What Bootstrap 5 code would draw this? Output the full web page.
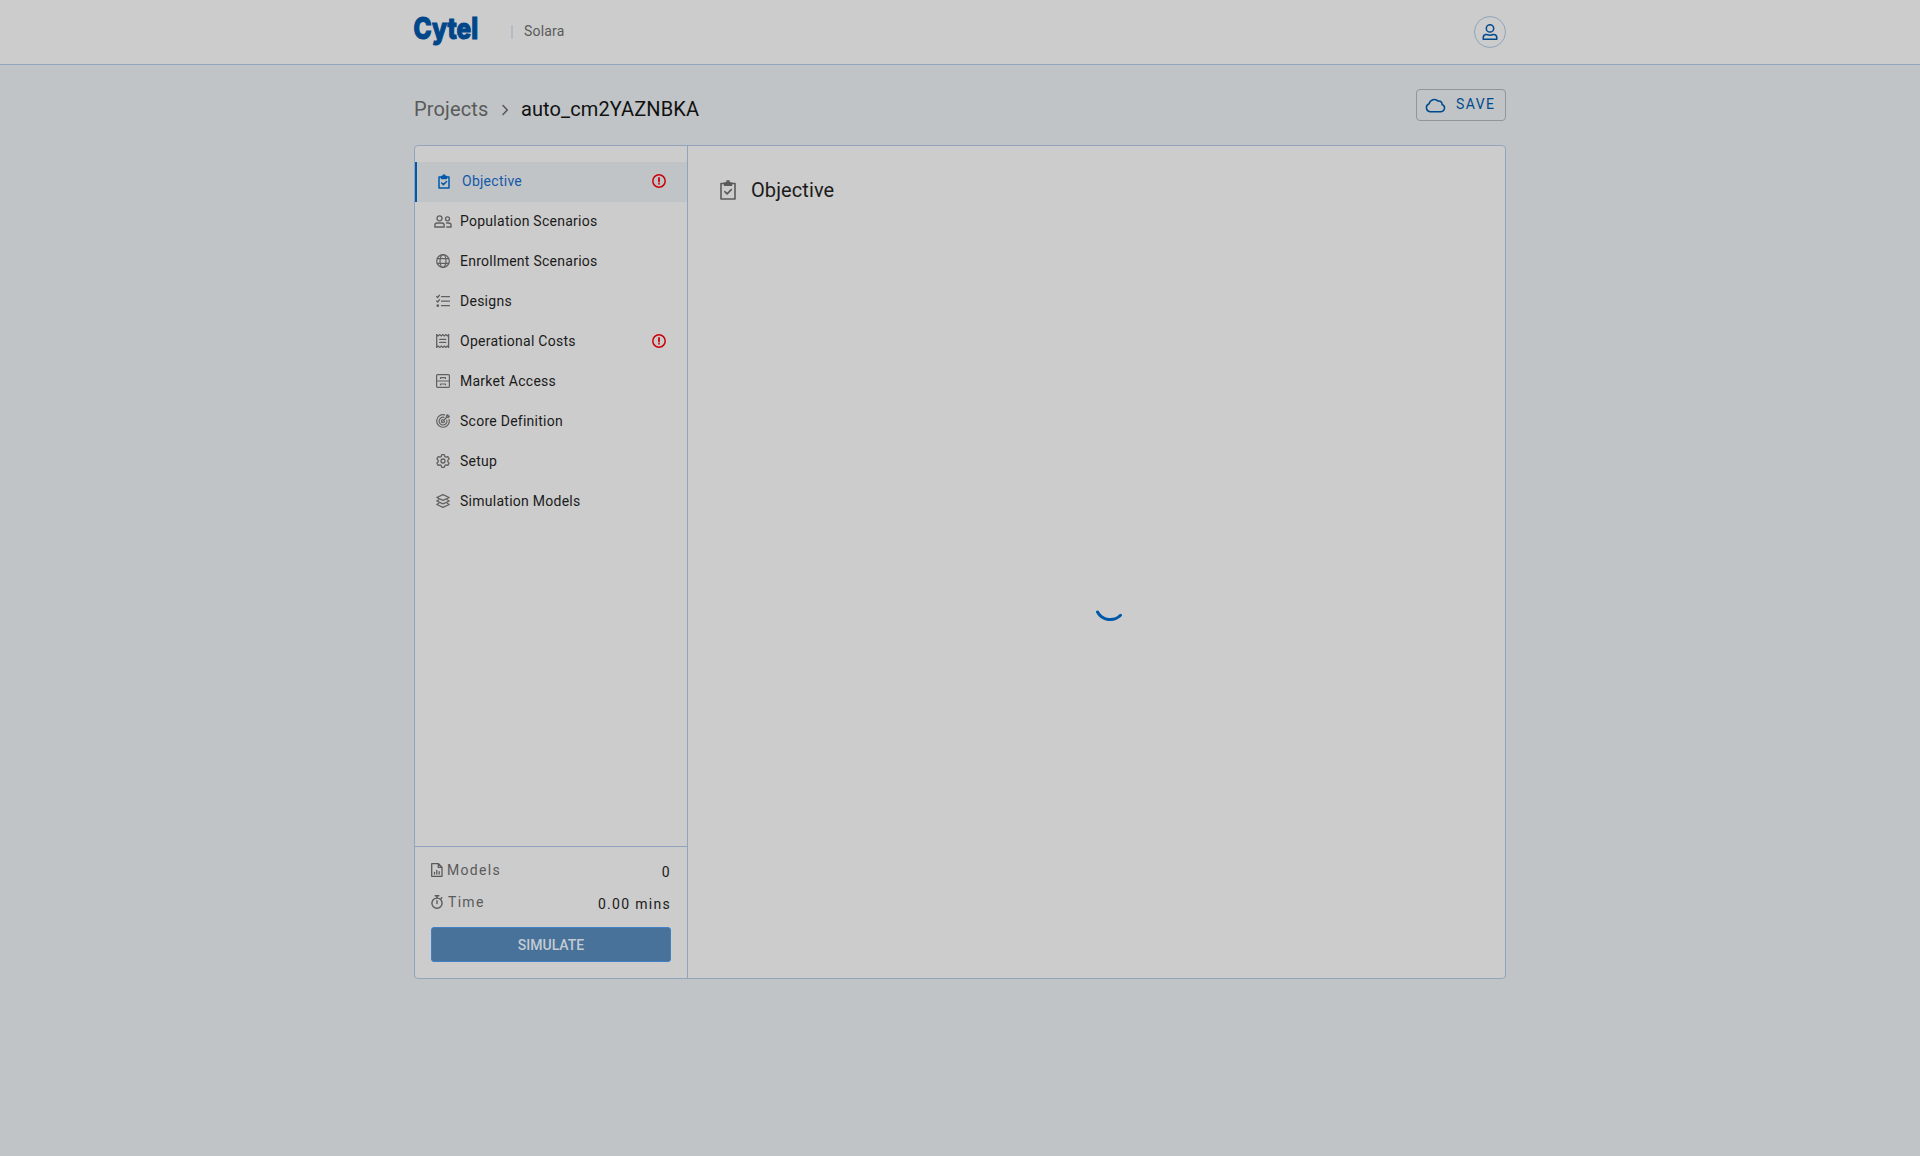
<!DOCTYPE html>
<html lang="en">
<head>
<meta charset="utf-8">
<meta name="viewport" content="width=device-width, initial-scale=1">
<title>Solara</title>
<link href="https://cdn.jsdelivr.net/npm/bootstrap@5.3.0/dist/css/bootstrap.min.css" rel="stylesheet">
<style>
body{background:#c0c4c7;font-family:Roboto,sans-serif;font-size:14px;line-height:20px;color:#1b1b1b;height:100vh;overflow:hidden}
svg{display:block;flex:none}
.ic{fill:none;stroke:currentColor;stroke-linecap:round;stroke-linejoin:round}
.page-w{width:1092px;margin:0 auto}
.topbar{height:65px;background:#ccc;border-bottom:1px solid #90a5bb}
.brand-area{padding-top:16px}
.logo{overflow:visible;font-family:Inter,sans-serif;font-weight:800;font-size:29.5px;fill:#00468a;stroke:#00468a;stroke-width:1.1px}
.brand-sep{width:2px;height:14px;background:#b5bac4;margin:9px 0 0 33px}
.product{margin:5px 0 0 11px;color:#5a5a5a;letter-spacing:.2px}
.avatar-btn{width:32px;height:32px;border:1px solid #90a5bb;border-radius:50%;margin-top:16px;color:#004a8c}
.crumbs{height:80px;padding-top:24px}
.crumb-text{font-size:20px;line-height:28px;padding-top:6px;color:#111;letter-spacing:.13px}
.crumb-text a{color:#5a5a5a}
.crumb-arrow{margin:2px 11.500px 0 13px;color:#555}
.save-btn{width:90px;height:32px;border:1px solid #909599;border-radius:4px;padding:0 0 2px 8px;color:#004a8c;background:transparent;letter-spacing:1.4px;font-size:14px}
.save-btn svg{margin:3px 6px 0 0}
.panel{height:834px;background:#ccc;border:1px solid #90a5bb;border-radius:4px}
.side{width:273px;border-right:1px solid #90a5bb;padding-top:16px}
.side-item{height:40px;padding:0 21px 2px 13px;letter-spacing:.26px;color:#1b1b1b}
.side-item .slot{width:32px;color:#606060}
.side-item.current{background:#c0c4c7;border-left:2px solid #0058ab;color:#1459a8}
.side-item.current .slot{color:#0058ab;padding-right:4px}
.alert-ic{color:#cc0009}
.summary{height:132px;border-top:1px solid #90a5bb;padding:13px 15px 16px 16px}
.sum-row{height:32px;letter-spacing:1.3px}
.sum-row .lbl{color:#5a5a5a;height:20px}
.sum-row .val{padding-top:2px;margin-right:1px}
.sim-btn{width:240px;height:35px;background:#48729a;border:1px solid #3f80c6;border-radius:3px;color:#c4cbd2;font-weight:500;font-size:14px;margin-top:3px;padding:1px 0 0}
.main-title{padding:28px 0 0 32px;font-size:20px;line-height:32px;color:#1b1b1b;letter-spacing:.1px}
.main-title svg{color:#5a5a5a;margin-right:15px;margin-top:0}
.load-zone{padding:382px 0 0 405px}
</style>
<script src="https://cdn.jsdelivr.net/npm/bootstrap@5.3.0/dist/js/bootstrap.bundle.min.js"></script>
</head>
<body>
<header class="topbar">
  <div class="page-w d-flex justify-content-between">
    <div class="brand-area d-flex">
      <svg class="logo" width="64" height="32" viewBox="0 0 64 32"><text y="23" x="-.4" textLength="64.500" lengthAdjust="spacingAndGlyphs">Cytel</text></svg>
      <span class="brand-sep"></span>
      <span class="product">Solara</span>
    </div>
    <div class="avatar-btn d-flex align-items-center justify-content-center">
      <svg class="ic" width="16" height="16" viewBox="0 0 16 16" stroke-width="1.5"><circle cx="8" cy="4.4" r="3.7"/><path d="M1.2 15.2v-1.5c0-2 1.3-3.2 3.2-3.2.9 0 1.8.7 3.6.7s2.700-.7 3.600-.7c1.900 0 3.200 1.200 3.200 3.200v1.500z"/></svg>
    </div>
  </div>
</header>
<div class="page-w">
  <div class="crumbs d-flex justify-content-between align-items-start">
    <nav class="crumb-text d-flex align-items-center">
      <a class="text-decoration-none">Projects</a>
      <svg class="ic crumb-arrow" width="8" height="12" viewBox="0 0 8 12" stroke-width="1.5"><path d="M2 1.500l4.300 4.500L2 10.500"/></svg>
      <span>auto_cm2YAZNBKA</span>
    </nav>
    <button class="save-btn d-flex align-items-center">
      <svg class="ic" width="21" height="15" viewBox="0 0 21 15" stroke-width="1.5"><path d="M5 13.700h11a3.700 3.700 0 0 0 1-7.200 2.800 2.800 0 0 0-3.700-3.200A5.300 5.300 0 0 0 4.100 5.800 4.100 4.100 0 0 0 5 13.700z"/></svg>
      <span class="ms-1">SAVE</span>
    </button>
  </div>
  <div class="panel d-flex">
    <aside class="side d-flex flex-column">
      <div class="side-item current d-flex align-items-center">
        <span class="slot d-flex justify-content-center"><svg class="ic" width="12" height="15" viewBox="0 0 12 15" stroke-width="1.5"><path d="M1 3h10v11H1z"/><path d="M3.500 2.500h5v2h-5z" fill="currentColor"/><circle cx="6" cy="1.700" r=".8"/><path d="M3.700 9l1.700 1.600L8.600 7.500"/></svg></span>
        <span class="flex-grow-1">Objective</span>
        <svg class="ic alert-ic" width="14" height="14" viewBox="0 0 14 14" stroke-width="1.5"><circle cx="7" cy="7" r="6.200"/><path d="M7 4v3.500M7 9.700v.1" stroke-width="1.800"/></svg>
      </div>
      <div class="side-item d-flex align-items-center">
        <span class="slot"><svg class="ic" style="margin-left:6px" width="18" height="13" viewBox="0 0 18 13" stroke-width="1.300"><circle cx="5.500" cy="3.300" r="2.500"/><path d="M.8 12V10.500c0-1.500 1-2.500 2.500-2.500h4.400c1.500 0 2.500 1 2.500 2.500V12z"/><circle cx="13.500" cy="3.800" r="2"/><path d="M12.500 8h2.300c1.500 0 2.300 1 2.300 2.400V12h-4.300"/></svg></span>
        <span>Population Scenarios</span>
      </div>
      <div class="side-item d-flex align-items-center">
        <span class="slot"><svg class="ic ms-2" width="14" height="14" viewBox="0 0 14 14" stroke-width="1.200"><circle cx="7" cy="7" r="6.300"/><ellipse cx="7" cy="7" rx="3" ry="6.300"/><path d="M1.300 4.700h11.400M1.300 9.300h11.400"/></svg></span>
        <span>Enrollment Scenarios</span>
      </div>
      <div class="side-item d-flex align-items-center">
        <span class="slot"><svg class="ic ms-2" width="14" height="14" viewBox="0 0 14 14" stroke-width="1.300"><path d="M5.500 2.700h8M5.500 7.200h8M5.500 11.700h8M.7 2.500l1 1L3.500 1.200M.7 7l1 1 1.800-2.300"/><circle cx="1.800" cy="11.700" r=".7" fill="currentColor"/></svg></span>
        <span>Designs</span>
      </div>
      <div class="side-item d-flex align-items-center">
        <span class="slot"><svg class="ic ms-2" width="14" height="14" viewBox="0 0 14 14" stroke-width="1.300"><path d="M.7.600l1.500 1.300L3.800.600l1.500 1.300L6.800.600l1.500 1.300L9.800.600l1.500 1.300L12.600.600v12.800l-1.300-1.300-1.500 1.300-1.500-1.300-1.500 1.300-1.500-1.300-1.500 1.300-1.600-1.300L.7 13.400z" stroke-linejoin="miter"/><path d="M3.700 5.300H9.700M3.700 8.400H9.700"/></svg></span>
        <span class="flex-grow-1">Operational Costs</span>
        <svg class="ic alert-ic" width="14" height="14" viewBox="0 0 14 14" stroke-width="1.5"><circle cx="7" cy="7" r="6.200"/><path d="M7 4v3.500M7 9.700v.1" stroke-width="1.800"/></svg>
      </div>
      <div class="side-item d-flex align-items-center">
        <span class="slot"><svg class="ic ms-2" width="14" height="14" viewBox="0 0 14 14" stroke-width="1.200"><rect x=".6" y=".6" width="12.800" height="12.800" rx="1"/><path d="M.6 7h12.800M4.500 4.500v-.8h5v.8M4.500 10.800V10h5v.8"/></svg></span>
        <span>Market Access</span>
      </div>
      <div class="side-item d-flex align-items-center">
        <span class="slot"><svg class="ic ms-2" width="14" height="14" viewBox="0 0 14 14" stroke-width="1.200"><path d="M8.700.900a6.300 6.300 0 1 0 4.400 4.500"/><path d="M8 3.300a3.900 3.900 0 1 0 2.800 2.800"/><path d="M6.800 5.500A1.600 1.600 0 1 0 8.500 7.200"/><path d="M7 7l3.500-3.500M10.500 3.500V1.700L11.800.600v1.600h1.600l-1.200 1.300z"/></svg></span>
        <span>Score Definition</span>
      </div>
      <div class="side-item d-flex align-items-center">
        <span class="slot"><svg class="ic ms-2" width="14" height="14" viewBox="0 0 14 14" stroke-width="1.300"><path d="M5.700.700h2.600l.5 1.800 1.100.7 1.900-.5 1.300 2.200L11.800 6.300v1.400l1.300 1.400-1.300 2.200-1.900-.5-1.100.7-.5 1.800H5.700l-.5-1.800-1.100-.7-1.900.5L.9 9.100l1.300-1.400V6.300L.9 4.900l1.300-2.200 1.900.5 1.100-.7z"/><circle cx="7" cy="7" r="2"/></svg></span>
        <span>Setup</span>
      </div>
      <div class="side-item d-flex align-items-center">
        <span class="slot"><svg class="ic ms-2" width="14" height="14" viewBox="0 0 14 14" stroke-width="1.300"><path d="M7 .7l6.200 2.800L7 6.300.8 3.500zM2.800 5.800L.8 7 7 9.800 13.200 7l-2-1.200M2.800 9.300l-2 1.200L7 13.300l6.200-2.800-2-1.200"/></svg></span>
        <span>Simulation Models</span>
      </div>
      <div class="summary mt-auto">
        <div class="sum-row d-flex justify-content-between">
          <span class="lbl d-flex align-items-center"><svg class="ic me-1" width="12" height="14" viewBox="0 0 12 14" stroke-width="1.300"><path d="M.7.700h6.800l3.500 3.500v9.100H.7zM7.300.900v3.500H11M3.500 11v-1.500M5.800 11V7.500M8.200 11V8.700"/></svg>Models</span>
          <span class="val">0</span>
        </div>
        <div class="sum-row d-flex justify-content-between">
          <span class="lbl d-flex align-items-center"><svg class="ic" style="margin-right:5px" width="12" height="14" viewBox="0 0 12 14" stroke-width="1.400"><circle cx="6" cy="8.200" r="5.100"/><path d="M4.200.700h3.600M6 .700v2.300M6 5.800v2.700M10 3.500l.8-.8"/></svg>Time</span>
          <span class="val">0.00 mins</span>
        </div>
        <button class="sim-btn d-flex align-items-center justify-content-center">SIMULATE</button>
      </div>
    </aside>
    <main class="flex-grow-1">
      <div class="main-title d-flex align-items-center">
        <svg class="ic" width="16" height="20" viewBox="0 0 16 20" stroke-width="1.600"><path d="M1 3.500h14v15.500H1z"/><path d="M4.500 3h7v2.200h-7z" fill="currentColor"/><circle cx="8" cy="2" r="1.200"/><path d="M4.800 11.700l2.300 2.200 4.200-4.300"/></svg>
        <span>Objective</span>
      </div>
      <div class="load-zone"><svg class="ic" width="34" height="34" viewBox="0 0 34 34" stroke="#0058ab" style="color:#0058ab" stroke-width="3"><path d="M4.500 24A14.500 14.500 0 0 0 27.500 27.300"/></svg></div>
    </main>
  </div>
</div>
</body>
</html>
